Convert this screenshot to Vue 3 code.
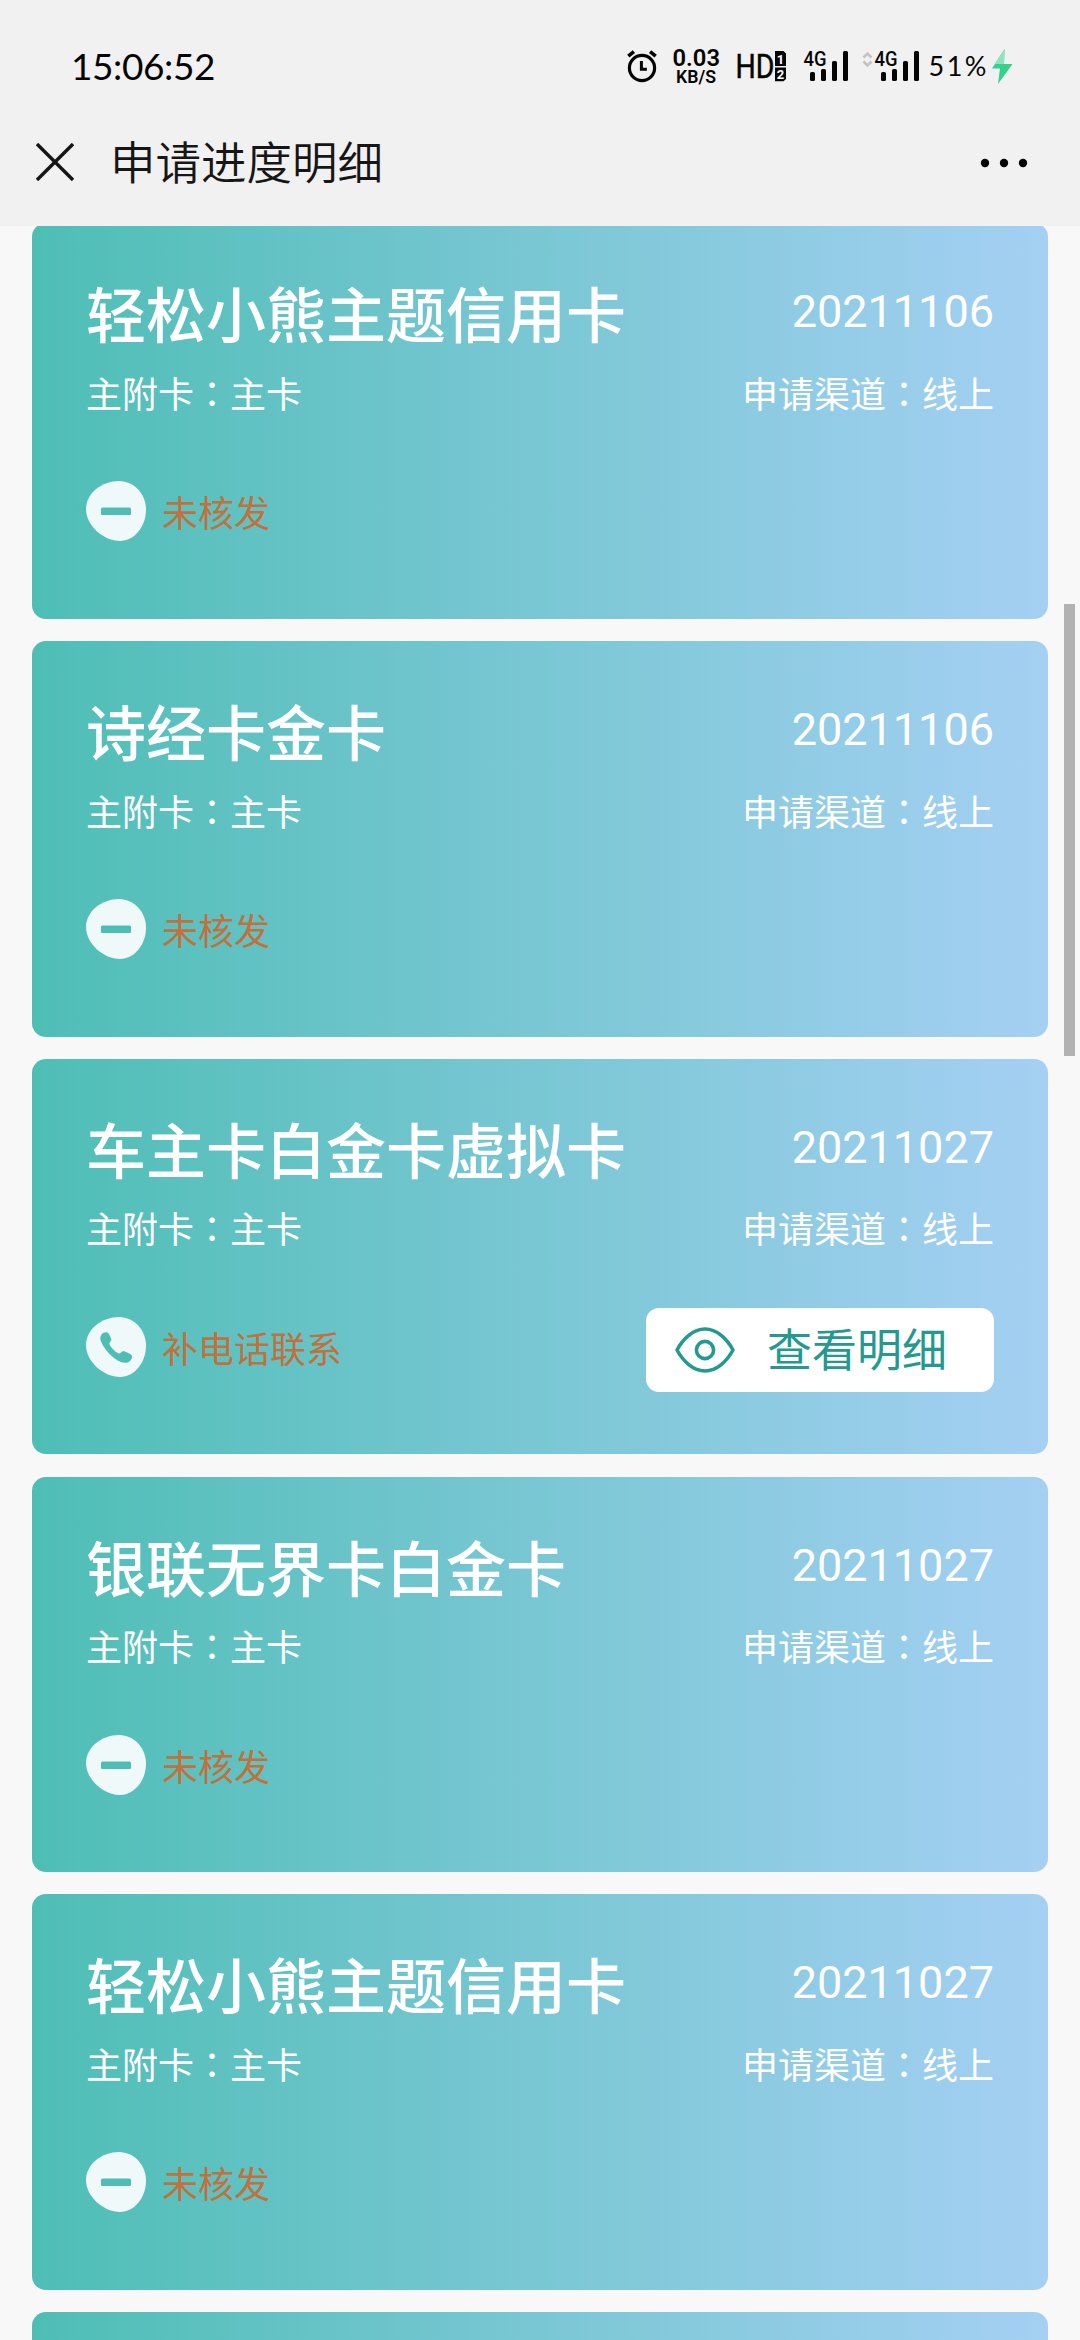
<script setup>
const cards = [
  { name: '轻松小熊主题信用卡', date: '20211106', status: '未核发', type: 'minus' },
  { name: '诗经卡金卡', date: '20211106', status: '未核发', type: 'minus' },
  { name: '车主卡白金卡虚拟卡', date: '20211027', status: '补电话联系', type: 'phone' },
  { name: '银联无界卡白金卡', date: '20211027', status: '未核发', type: 'minus' },
  { name: '轻松小熊主题信用卡', date: '20211027', status: '未核发', type: 'minus' },
  { name: '', date: '', status: '', type: '' },
]
</script>

<template>
  <div class="screen" lang="zh-CN">
    <header class="header">
      <div class="statusbar">
        <span class="clock">15:06:52</span>
        <svg class="sys" width="400" height="48" viewBox="620 42 400 48">
          <!-- alarm -->
          <g fill="none" stroke="#050505" stroke-width="3.2">
            <circle cx="642" cy="68" r="12.6" />
            <path d="M641.4 61v8.3h5.5" stroke-width="3" />
            <path d="M628.3 56.2l5.6-4.6M655.700 56.200l-5.600-4.600" stroke-width="3.600" />
          </g>
          <!-- network speed -->
          <text x="672.500" y="66" class="num" font-size="23.500" textLength="47.500" lengthAdjust="spacingAndGlyphs">0.03</text>
          <text x="676" y="83" class="unit" font-size="17.500" textLength="40" lengthAdjust="spacingAndGlyphs">KB/S</text>
          <!-- HD voice -->
          <text x="735.500" y="78" class="hd" font-size="33" textLength="39" lengthAdjust="spacingAndGlyphs">HD</text>
          <path d="M775 51h8.500l2.500 2.500V66h-11zM775 67.500h11V79l-2.500 2.200H775z" fill="#050505" />
          <text x="780.500" y="63.500" class="tag" text-anchor="middle">1</text>
          <text x="780.500" y="79" class="tag" text-anchor="middle">2</text>
          <!-- signals -->
          <g v-for="dx in [0, 71]" :key="dx" :transform="`translate(${dx} 0)`">
            <text x="803.500" y="66" class="net" font-size="20" textLength="23" lengthAdjust="spacingAndGlyphs">4G</text>
            <g fill="#050505">
              <rect x="810" y="72" width="5" height="9" rx="1.600" />
              <rect x="821" y="69" width="5" height="12" rx="1.600" />
              <rect x="832" y="61" width="5" height="20" rx="1.600" />
              <rect x="843" y="51" width="5" height="30" rx="1.600" />
            </g>
          </g>
          <path d="M863.500 57.500l4-4 4 4M863.500 61.500l4 4 4-4" fill="none" stroke="#c3c3c3" stroke-width="2.600" />
          <text x="928.500" y="76" class="pct" font-size="27" textLength="58" lengthAdjust="spacing">51%</text>
          <path d="M1004.500 49L992 68.500h8L998 84l14.500-20H1004z" fill="#35d089" />
          <path d="M1004.500 49l-9.600 15H1004z" fill="#8fe3bd" />
        </svg>
      </div>
      <div class="navbar">
        <svg class="close" width="38" height="38" viewBox="0 0 38 38">
          <path d="M1 1l36 36M37 1L1 37" stroke="#161616" stroke-width="3.400" />
        </svg>
        <h1>申请进度明细</h1>
        <svg class="more" width="48" height="10" viewBox="0 0 48 10" fill="#050505">
          <circle cx="5" cy="5" r="4.200" /><circle cx="24" cy="5" r="4.200" /><circle cx="43" cy="5" r="4.200" />
        </svg>
      </div>
    </header>

    <main class="list">
      <article v-for="(c, i) in cards" :key="i" class="card">
        <template v-if="c.name">
          <div class="row top">
            <h2>{{ c.name }}</h2>
            <span class="date">{{ c.date }}</span>
          </div>
          <div class="row sub">
            <span>主附卡<i lang="zh-TW">：</i>主卡</span>
            <span>申请渠道<i lang="zh-TW">：</i>线上</span>
          </div>
          <div class="row bottom">
            <div class="status">
              <svg width="60" height="60" viewBox="0 0 60 60">
                <path d="M33 0C49 0 60 14 60 28.500C60 46 48 60 34 60C18 60 0 45 0 28C0 12 16 0 33 0Z" fill="#eff9f9" />
                <rect v-if="c.type === 'minus'" x="15" y="26.500" width="30" height="7.500" rx="1.500" fill="#50bdb5" />
                <path v-else d="M15.500 17.500C17 15.500 19.500 14.700 21.500 15.500C23 16.500 24.300 19.500 25.300 22C25.800 23.800 23.300 25.200 23.300 26.800C24 29.500 29.500 35.500 32.800 36.500C34.500 36.800 35.500 34 37.500 34C40 34.500 43.500 36.500 45.500 38C47 39.500 45.500 43 43.500 44.500C41 46.300 37.500 46 34.500 44.800C27 41.800 18.500 33 15 24.500C14 22 14 19.500 15.500 17.500Z" fill="#50bdb5" />
              </svg>
              <span>{{ c.status }}</span>
            </div>
            <button v-if="c.type === 'phone'" class="detail">
              <svg width="60" height="46" viewBox="0 0 60 46" fill="none" stroke="#23998f" stroke-width="3.600" stroke-linejoin="round">
                <path d="M2 23C8 12 18 2 30 2S52 12 58 23C52 34 42 44 30 44S8 34 2 23Z" />
                <circle cx="30" cy="23" r="8.600" />
              </svg>
              <span>查看明细</span>
            </button>
          </div>
        </template>
      </article>
    </main>
    <div class="scrollbar"></div>
  </div>
</template>

<style>
html, body { margin: 0; background: #f8f8f8; }
</style>

<style scoped>
.screen {
  position: relative;
  width: 1080px;
  height: 2340px;
  overflow: hidden;
  background: #f8f8f8;
  font-family: Roboto, "Noto Sans CJK SC", sans-serif;
  display: flex;
  flex-direction: column;
}
.header {
  flex: none;
  height: 226px;
  background: #f1f1f1;
}
.statusbar {
  display: flex;
  justify-content: space-between;
  padding: 42px 60px 0 71px;
  height: 48px;
}
.clock {
  font: 400 37px/47px Lato, sans-serif;
  letter-spacing: -0.4px;
  color: #050505;
}
.sys { flex: none; }
.num { font-family: Roboto, sans-serif; font-weight: 600; fill: #050505; }
.unit { font-family: Roboto, sans-serif; font-weight: 600; fill: #050505; }
.hd { font-family: Roboto, sans-serif; font-weight: 400; fill: #050505; stroke: #050505; stroke-width: 0.5px; }
.net { font-family: Roboto, sans-serif; font-weight: 500; fill: #050505; }
.pct { font-family: Lato, sans-serif; fill: #050505; }
.tag { font: 700 13px Roboto, sans-serif; fill: #fff; }
.navbar {
  display: flex;
  align-items: center;
  height: 66px;
  margin-top: 39px;
  padding: 0 52px 0 36px;
}
.navbar .close { margin-top: -1px; }
.navbar .more { margin-top: 1px; }
.navbar h1 {
  margin: -4px auto 0 36px;
  font: 350 45.500px/66px "Noto Sans CJK SC", sans-serif;
  color: #161616;
}
.list {
  flex: 1;
  min-height: 0;
  overflow: hidden;
  display: flex;
  flex-direction: column;
  gap: 22.250px;
  padding: 0 32px;
}
.card {
  flex: none;
  box-sizing: border-box;
  height: 395.500px;
  border-radius: 14px;
  padding: 49px 54px 0;
  background: linear-gradient(90deg, #4ebeb5, #a5d0f3);
  color: #fff;
}
.card:first-child { margin-top: -2.750px; }
.row {
  display: flex;
  justify-content: space-between;
}
.top { height: 80px; align-items: center; }
.top h2 {
  margin: 0;
  font: 500 60px/80px "Noto Sans CJK SC", sans-serif;
}
.date { font: 400 45px/60px Roboto, sans-serif; }
.sub {
  height: 54px;
  margin-top: 12.500px;
  font: 400 36px/54px "Noto Sans CJK SC", sans-serif;
}
.sub i { font-family: "Noto Sans CJK TC", sans-serif; font-style: normal; }
.bottom { margin-top: 53.500px; height: 84px; align-items: center; }
.status {
  display: flex;
  align-items: center;
  gap: 16px;
  margin-top: -6px;
}
.status span {
  font: 400 36px/54px "Noto Sans CJK SC", sans-serif;
  color: #c2703c;
}
.detail {
  display: flex;
  align-items: center;
  box-sizing: border-box;
  width: 348px;
  height: 84px;
  padding: 0 0 0 29px;
  gap: 32px;
  border: 0;
  border-radius: 13px;
  background: #fff;
  font: 400 45px/60px "Noto Sans CJK SC", sans-serif;
  color: #23998f;
}
.detail span { margin-top: -4px; }
.scrollbar {
  position: absolute;
  left: 1064px;
  top: 604px;
  width: 11px;
  height: 452px;
  background: #b2b2b2;
}
</style>
